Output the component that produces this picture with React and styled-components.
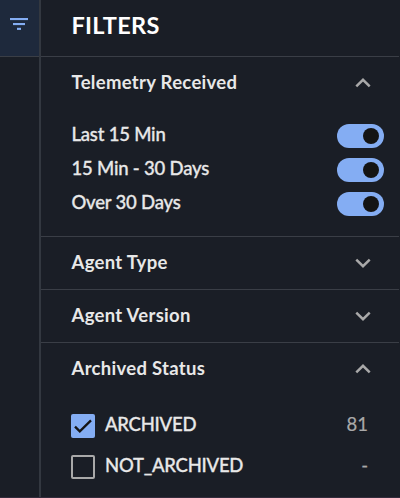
import { useState } from "react";
import styled, { createGlobalStyle } from "styled-components";

const GlobalStyle = createGlobalStyle`
  * {
    box-sizing: border-box;
  }
  body {
    margin: 0;
    background: #1a1e26;
    font-family: "Lato", sans-serif;
  }
`;

const ranges = ["Last 15 Min", "15 Min - 30 Days", "Over 30 Days"];
const statuses = [
  { name: "ARCHIVED", count: "81" },
  { name: "NOT_ARCHIVED", count: "-" },
];

const Chevron = ({ open }) => (
  <ChevronIcon viewBox="0 0 16 10" $open={open}>
    <path d="M1.3 1.6 8 8.2 14.7 1.6" />
  </ChevronIcon>
);

const Section = ({ title, height, defaultOpen, children }) => {
  const [open, setOpen] = useState(!!defaultOpen);
  return (
    <SectionBox $height={open ? height : 53}>
      <SectionHeader onClick={() => setOpen(!open)}>
        <SectionTitle>{title}</SectionTitle>
        <Chevron open={open} />
      </SectionHeader>
      {open && children}
    </SectionBox>
  );
};

export default function App() {
  const [enabled, setEnabled] = useState([true, true, true]);
  const [checked, setChecked] = useState([true, false]);

  const flip = (list, i) => list.map((v, n) => (n === i ? !v : v));

  return (
    <>
      <GlobalStyle />
      <Layout>
        <Rail>
          <RailButton>
            <svg width="20" height="14" viewBox="0 0 20 14" fill="#84adf3">
              <rect x="1" y="1" width="18" height="2.1" />
              <rect x="4" y="6" width="12" height="2.1" />
              <rect x="8" y="10.8" width="4" height="2.1" />
            </svg>
          </RailButton>
        </Rail>
        <Panel>
          <PanelHeader>
            <h1>FILTERS</h1>
          </PanelHeader>
          <Section title="Telemetry Received" height={180} defaultOpen>
            <ToggleList>
              {ranges.map((name, i) => (
                <ToggleRow key={name}>
                  <Label>{name}</Label>
                  <Switch
                    role="switch"
                    aria-checked={enabled[i]}
                    $on={enabled[i]}
                    onClick={() => setEnabled(flip(enabled, i))}
                  />
                </ToggleRow>
              ))}
            </ToggleList>
          </Section>
          <Section title="Agent Type" height={53} />
          <Section title="Agent Version" height={53} />
          <Section title="Archived Status" height={155} defaultOpen>
            <CheckList>
              {statuses.map(({ name, count }, i) => (
                <CheckRow key={name}>
                  <Checkbox
                    role="checkbox"
                    aria-checked={checked[i]}
                    $on={checked[i]}
                    onClick={() => setChecked(flip(checked, i))}
                  >
                    {checked[i] && (
                      <svg width="20" height="20" viewBox="0 0 20 20">
                        <path d="M2 10.6 6.8 15.4 18 4.4" />
                      </svg>
                    )}
                  </Checkbox>
                  <Label>{name}</Label>
                  <Count>{count}</Count>
                </CheckRow>
              ))}
            </CheckList>
          </Section>
        </Panel>
      </Layout>
    </>
  );
}

const Layout = styled.div`
  display: flex;
  width: 400px;
  height: 498px;
  overflow: hidden;
  background: #1a1e26;
  border-bottom: 1px solid #332c3c;
`;

const Rail = styled.aside`
  width: 39px;
  flex: none;
`;

const RailButton = styled.div`
  display: flex;
  justify-content: center;
  height: 57px;
  padding: 17px 1px 0 0;
  background: #1e293c;
  border-bottom: 1px solid #3a3e46;
`;

const Panel = styled.main`
  flex: 1;
  margin-right: 1px;
  border-left: 2px solid #333840;
`;

const PanelHeader = styled.header`
  height: 57px;
  padding: 10px 0 0 30.5px;
  border-bottom: 1px solid #3a3e46;

  h1 {
    margin: 0;
    color: #fff;
    font-size: 23.5px;
    line-height: 30px;
    font-weight: 700;
    letter-spacing: 0.3px;
  }
`;

const SectionBox = styled.section`
  height: ${(props) => props.$height}px;
  border-bottom: 1px solid #3a3e46;
`;

const SectionHeader = styled.div`
  display: flex;
  align-items: center;
  justify-content: space-between;
  height: 52px;
  padding: 0 28px 0 30.5px;
  cursor: pointer;
`;

const SectionTitle = styled.h2`
  margin: 0;
  padding-bottom: 2px;
  color: #e8e8e8;
  font-size: 18.5px;
  line-height: 24px;
  font-weight: 700;
  letter-spacing: 0.3px;
`;

const ChevronIcon = styled.svg`
  width: 16px;
  height: 10px;
  fill: none;
  stroke: #a9a9a9;
  stroke-width: 2.5;
  transform: ${(props) => (props.$open ? "rotate(180deg)" : "none")};
`;

const ToggleList = styled.div`
  padding: 10px 15.5px 0 30.5px;
`;

const ToggleRow = styled.div`
  display: flex;
  align-items: center;
  justify-content: space-between;
  height: 34px;
`;

const Label = styled.span`
  padding-bottom: 4px;
  color: #e8e8e8;
  font-size: 18.5px;
  line-height: 24px;
  font-weight: 500;
  letter-spacing: -0.2px;
  -webkit-text-stroke: 0.3px #e8e8e8;
  white-space: nowrap;
`;

const Switch = styled.button`
  display: flex;
  align-items: center;
  justify-content: ${(props) => (props.$on ? "flex-end" : "flex-start")};
  width: 46.5px;
  height: 24px;
  padding: 0 5px;
  border: 0;
  border-radius: 12px;
  background: ${(props) => (props.$on ? "#84adf3" : "#555a63")};

  &::after {
    content: "";
    width: 16px;
    height: 16px;
    border-radius: 50%;
    background: #141414;
  }
`;

const CheckList = styled.div`
  padding: 10px 31px 0 30px;
`;

const CheckRow = styled.div`
  display: flex;
  align-items: center;
  height: 41px;

  ${Label} {
    padding-bottom: 3px;
    letter-spacing: -0.25px;
  }
`;

const Checkbox = styled.button`
  display: flex;
  align-items: center;
  justify-content: center;
  flex: none;
  width: 24px;
  height: 24px;
  margin-right: 10px;
  padding: 0;
  border: ${(props) => (props.$on ? "0" : "2px solid #a9a9a9")};
  border-radius: 2px;
  background: ${(props) => (props.$on ? "#84adf3" : "transparent")};

  path {
    fill: none;
    stroke: #141414;
    stroke-width: 2.3;
  }
`;

const Count = styled.span`
  margin-left: auto;
  padding-bottom: 3px;
  color: #a9a9a9;
  font-size: 18.5px;
  line-height: 24px;
  -webkit-text-stroke: 0.2px #a9a9a9;
`;
